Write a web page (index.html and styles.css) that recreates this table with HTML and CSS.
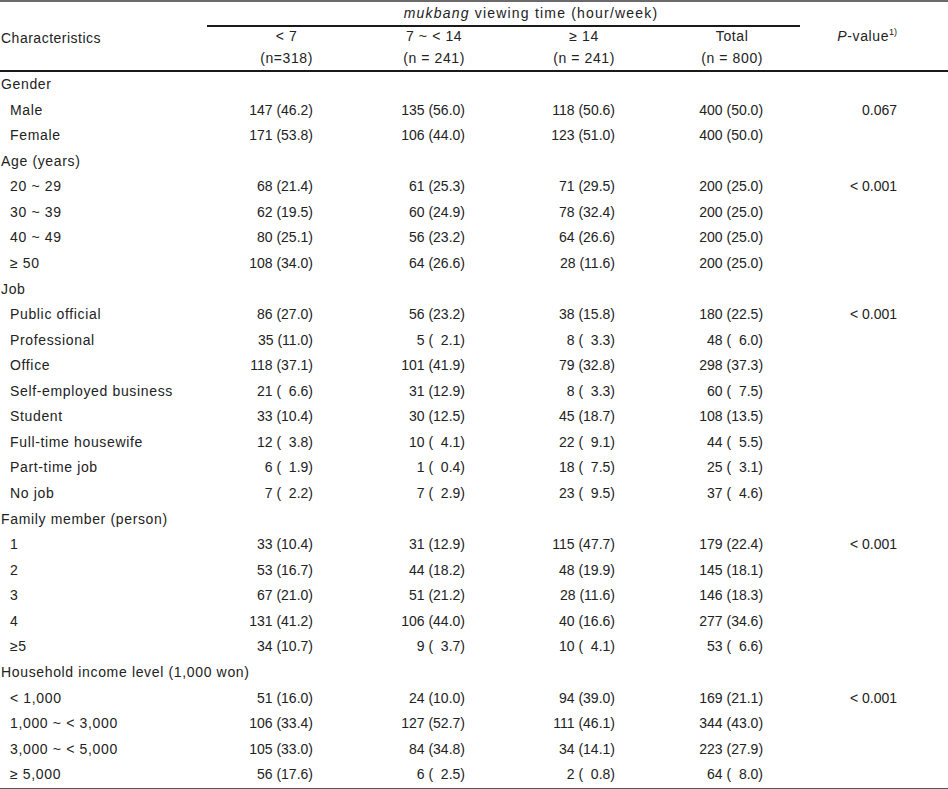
FILE: index.html
```html
<!DOCTYPE html>
<html lang="en">
<head>
<meta charset="utf-8">
<title>mukbang viewing time</title>
<link rel="stylesheet" href="styles.css">
</head>
<body>
<div class="wrap">
<table class="tbl">
  <colgroup>
    <col class="c-label"><col class="c1"><col class="c2"><col class="c3"><col class="c4"><col class="c5">
  </colgroup>
  <thead>
    <tr class="h1">
      <th></th>
      <th colspan="4" class="span"><i>mukbang</i> viewing time (hour/week)</th>
      <th></th>
    </tr>
    <tr class="h2">
      <th class="lab"><span class="hb">Characteristics</span></th>
      <th class="n1"><span class="hb">&lt; 7<br>(n=318)</span></th>
      <th class="n2"><span class="hb">7 ~ &lt; 14<br>(n = 241)</span></th>
      <th class="n3"><span class="hb">&#8805; 14<br>(n = 241)</span></th>
      <th class="n4"><span class="hb">Total<br>(n = 800)</span></th>
      <th class="n5"><span class="hb"><i>P</i>-value<sup>1)</sup><br>&nbsp;</span></th>
    </tr>
  </thead>
  <tbody>
    <tr class="grp"><td colspan="6">Gender</td></tr>
    <tr><td class="sub">Male</td><td class="n1">147 (46.2)</td><td class="n2">135 (56.0)</td><td class="n3">118 (50.6)</td><td class="n4">400 (50.0)</td><td class="n5">0.067</td></tr>
    <tr><td class="sub">Female</td><td class="n1">171 (53.8)</td><td class="n2">106 (44.0)</td><td class="n3">123 (51.0)</td><td class="n4">400 (50.0)</td><td class="n5"></td></tr>
    <tr class="grp"><td colspan="6">Age (years)</td></tr>
    <tr><td class="sub">20 ~ 29</td><td class="n1">68 (21.4)</td><td class="n2">61 (25.3)</td><td class="n3">71 (29.5)</td><td class="n4">200 (25.0)</td><td class="n5">&lt; 0.001</td></tr>
    <tr><td class="sub">30 ~ 39</td><td class="n1">62 (19.5)</td><td class="n2">60 (24.9)</td><td class="n3">78 (32.4)</td><td class="n4">200 (25.0)</td><td class="n5"></td></tr>
    <tr><td class="sub">40 ~ 49</td><td class="n1">80 (25.1)</td><td class="n2">56 (23.2)</td><td class="n3">64 (26.6)</td><td class="n4">200 (25.0)</td><td class="n5"></td></tr>
    <tr><td class="sub">&#8805; 50</td><td class="n1">108 (34.0)</td><td class="n2">64 (26.6)</td><td class="n3">28 (11.6)</td><td class="n4">200 (25.0)</td><td class="n5"></td></tr>
    <tr class="grp"><td colspan="6">Job</td></tr>
    <tr><td class="sub">Public official</td><td class="n1">86 (27.0)</td><td class="n2">56 (23.2)</td><td class="n3">38 (15.8)</td><td class="n4">180 (22.5)</td><td class="n5">&lt; 0.001</td></tr>
    <tr><td class="sub">Professional</td><td class="n1">35 (11.0)</td><td class="n2">5 (&#8199;2.1)</td><td class="n3">8 (&#8199;3.3)</td><td class="n4">48 (&#8199;6.0)</td><td class="n5"></td></tr>
    <tr><td class="sub">Office</td><td class="n1">118 (37.1)</td><td class="n2">101 (41.9)</td><td class="n3">79 (32.8)</td><td class="n4">298 (37.3)</td><td class="n5"></td></tr>
    <tr><td class="sub">Self-employed business</td><td class="n1">21 (&#8199;6.6)</td><td class="n2">31 (12.9)</td><td class="n3">8 (&#8199;3.3)</td><td class="n4">60 (&#8199;7.5)</td><td class="n5"></td></tr>
    <tr><td class="sub">Student</td><td class="n1">33 (10.4)</td><td class="n2">30 (12.5)</td><td class="n3">45 (18.7)</td><td class="n4">108 (13.5)</td><td class="n5"></td></tr>
    <tr><td class="sub">Full-time housewife</td><td class="n1">12 (&#8199;3.8)</td><td class="n2">10 (&#8199;4.1)</td><td class="n3">22 (&#8199;9.1)</td><td class="n4">44 (&#8199;5.5)</td><td class="n5"></td></tr>
    <tr><td class="sub">Part-time job</td><td class="n1">6 (&#8199;1.9)</td><td class="n2">1 (&#8199;0.4)</td><td class="n3">18 (&#8199;7.5)</td><td class="n4">25 (&#8199;3.1)</td><td class="n5"></td></tr>
    <tr><td class="sub">No job</td><td class="n1">7 (&#8199;2.2)</td><td class="n2">7 (&#8199;2.9)</td><td class="n3">23 (&#8199;9.5)</td><td class="n4">37 (&#8199;4.6)</td><td class="n5"></td></tr>
    <tr class="grp"><td colspan="6">Family member (person)</td></tr>
    <tr><td class="sub">1</td><td class="n1">33 (10.4)</td><td class="n2">31 (12.9)</td><td class="n3">115 (47.7)</td><td class="n4">179 (22.4)</td><td class="n5">&lt; 0.001</td></tr>
    <tr><td class="sub">2</td><td class="n1">53 (16.7)</td><td class="n2">44 (18.2)</td><td class="n3">48 (19.9)</td><td class="n4">145 (18.1)</td><td class="n5"></td></tr>
    <tr><td class="sub">3</td><td class="n1">67 (21.0)</td><td class="n2">51 (21.2)</td><td class="n3">28 (11.6)</td><td class="n4">146 (18.3)</td><td class="n5"></td></tr>
    <tr><td class="sub">4</td><td class="n1">131 (41.2)</td><td class="n2">106 (44.0)</td><td class="n3">40 (16.6)</td><td class="n4">277 (34.6)</td><td class="n5"></td></tr>
    <tr><td class="sub">&#8805;5</td><td class="n1">34 (10.7)</td><td class="n2">9 (&#8199;3.7)</td><td class="n3">10 (&#8199;4.1)</td><td class="n4">53 (&#8199;6.6)</td><td class="n5"></td></tr>
    <tr class="grp"><td colspan="6">Household income level (1,000 won)</td></tr>
    <tr><td class="sub">&lt; 1,000</td><td class="n1">51 (16.0)</td><td class="n2">24 (10.0)</td><td class="n3">94 (39.0)</td><td class="n4">169 (21.1)</td><td class="n5">&lt; 0.001</td></tr>
    <tr><td class="sub">1,000 ~ &lt; 3,000</td><td class="n1">106 (33.4)</td><td class="n2">127 (52.7)</td><td class="n3">111 (46.1)</td><td class="n4">344 (43.0)</td><td class="n5"></td></tr>
    <tr><td class="sub">3,000 ~ &lt; 5,000</td><td class="n1">105 (33.0)</td><td class="n2">84 (34.8)</td><td class="n3">34 (14.1)</td><td class="n4">223 (27.9)</td><td class="n5"></td></tr>
    <tr><td class="sub">&#8805; 5,000</td><td class="n1">56 (17.6)</td><td class="n2">6 (&#8199;2.5)</td><td class="n3">2 (&#8199;0.8)</td><td class="n4">64 (&#8199;8.0)</td><td class="n5"></td></tr>
  </tbody>
</table>
</div>
</body>
</html>
```

FILE: styles.css
```css
html, body {
  margin: 0;
  padding: 0;
  background: #ffffff;
}
body {
  font-family: "Liberation Sans", Arial, sans-serif;
  font-size: 14px;
  color: #222222;
  width: 948px;
}
.wrap {
  border-top: 2px solid #6a6a6a;
  border-bottom: 2px solid #555555;
}
.tbl {
  width: 948px;
  table-layout: fixed;
  border-collapse: separate;
  border-spacing: 0;
}
.c-label { width: 207px; }
.c1 { width: 148px; }
.c2 { width: 150px; }
.c3 { width: 150px; }
.c4 { width: 145px; }
.c5 { width: 148px; }

.tbl th, .tbl td {
  padding: 0;
  white-space: nowrap;
  font-weight: normal;
}
.h1 th {
  height: 23px;
  line-height: 23px;
  vertical-align: middle;
}
.h1 .span {
  border-bottom: 2px solid #1a1a1a;
  text-align: center;
  padding-left: 55px;
  letter-spacing: 1.2px;
}
.h2 th {
  height: 43px;
  line-height: 22px;
  vertical-align: top;
  border-bottom: 2px solid #1a1a1a;
  text-align: right;
  letter-spacing: 0.6px;
}
.h2 .lab {
  text-align: left;
  padding-left: 1px;
  letter-spacing: 0.5px;
}
.hb {
  display: inline-block;
  text-align: center;
  margin-top: -2px;
}
sup {
  font-size: 9px;
  line-height: 0;
  vertical-align: 6px;
  letter-spacing: 0;
}
.tbl tbody td {
  height: 25.56px;
  line-height: 25.56px;
  vertical-align: middle;
  text-align: right;
}
.tbl tbody .grp td {
  text-align: left;
  padding-left: 1px;
  letter-spacing: 0.65px;
}
.tbl tbody td.sub {
  text-align: left;
  padding-left: 10px;
  letter-spacing: 0.65px;
}
.n1 { padding-right: 42px !important; }
.n2 { padding-right: 40px !important; }
.n3 { padding-right: 40px !important; }
.n4 { padding-right: 37px !important; }
.n5 { padding-right: 51px !important; }
```
